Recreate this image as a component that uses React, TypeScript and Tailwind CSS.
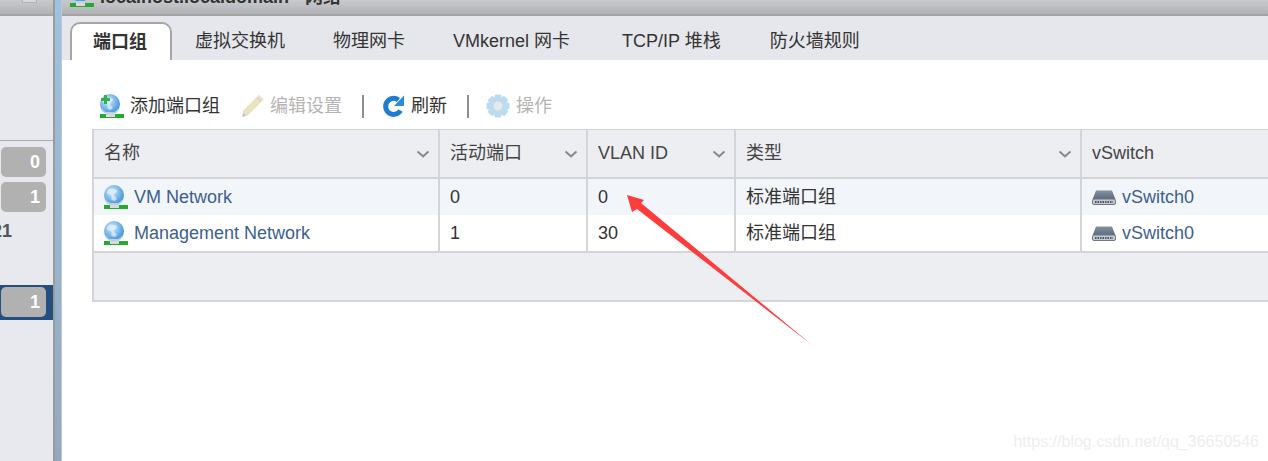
import React from "react";

function Globe({ plus = false }: { plus?: boolean }) {
  return (
    <svg width="24" height="24" viewBox="0 0 24 24" className="shrink-0">
      <defs>
        <radialGradient id="gb" cx="0.4" cy="0.35" r="0.7">
          <stop offset="0" stopColor="#d5ecfb" />
          <stop offset="0.55" stopColor="#7ab8ea" />
          <stop offset="1" stopColor="#3b8ad6" />
        </radialGradient>
      </defs>
      <circle cx="10" cy="10" r="10" fill="url(#gb)" />
      <path d="M6 3.500c3 .5 6 0 7 2s-3 2.500-3 4.500 3 2 2.500 4-3 2-4.500 1 .5-3-1-4.500-4-1-4-3 1.500-3.500 3-4z" fill="#e4f2fc" opacity="0.7" />
      <path d="M1.500 15a10 10 0 0 0 17 0" fill="none" stroke="#a6d3f0" strokeWidth="1.500" />
      <rect x="6" y="18" width="9" height="2" fill="#c9ced3" />
      <rect x="0" y="20" width="24" height="4" fill="#22ab2e" />
      <rect x="6" y="20" width="9" height="3" fill="#d7dade" />
      {plus && <path d="M4 1h3v3h3v3H7v3H4V7H1V4h3z" fill="#31b24a" />}
    </svg>
  );
}

function Pencil() {
  return (
    <svg width="22" height="24" viewBox="0 0 22 24" className="shrink-0">
      <path d="M17 1.500l4 4L6 20.500l-5.500 2 1.500-6z" fill="#efe3b8" stroke="#d8d8d0" strokeWidth="1" />
      <path d="M15 3.500l4 4" stroke="#d5d5d5" strokeWidth="1.500" />
      <path d="M.5 22.500l1-3.500 2.500 2.500z" fill="#bdbdbd" />
    </svg>
  );
}

function Refresh() {
  return (
    <svg width="24" height="24" viewBox="0 0 24 24" className="shrink-0">
      <path d="M18.500 16.500a8 8 0 1 1-2-10.500" fill="none" stroke="#1f7dd1" strokeWidth="5" />
      <path d="M22 1.500V12H12z" fill="#2b8bdc" />
    </svg>
  );
}

function Gear() {
  return (
    <svg width="24" height="24" viewBox="0 0 24 24" className="shrink-0">
      {[0, 45, 90, 135].map((a) => (
        <rect key={a} x="8.500" y="0.500" width="7" height="23" rx="1.500" fill="#bcdaf0" transform={`rotate(${a} 12 12)`} />
      ))}
      <circle cx="12" cy="12" r="8.500" fill="#bcdaf0" />
      <circle cx="12" cy="12" r="4.500" fill="#e6e8ea" />
    </svg>
  );
}

function SwitchIcon() {
  return (
    <svg width="24" height="15" viewBox="0 0 24 15" className="shrink-0">
      <defs>
        <linearGradient id="sw" x1="0" y1="0" x2="0" y2="1">
          <stop offset="0" stopColor="#8592a6" />
          <stop offset="1" stopColor="#5a697d" />
        </linearGradient>
      </defs>
      <path d="M4 .5h16L23.500 9.500H.5z" fill="url(#sw)" />
      <rect x="0.500" y="9" width="23" height="5.500" rx="1.500" fill="#c3c8ce" stroke="#6d7682" strokeWidth="1" />
      <path d="M3 12h18" stroke="#47566a" strokeWidth="2" strokeDasharray="1.500 1" />
    </svg>
  );
}

function Chevron() {
  return (
    <svg width="14" height="8" viewBox="0 0 14 8" className="shrink-0">
      <path d="M1.500 1.500L7 6.300l5.500-4.800" fill="none" stroke="#8a8a8a" strokeWidth="2" />
    </svg>
  );
}

const COLS = "grid grid-cols-[346px_148px_148px_346px_1fr]";

function HeaderCell({ label, chevron = true }: { label: string; chevron?: boolean }) {
  return (
    <div className="flex items-center justify-between pl-[10px] pr-[8px] border-r-2 border-[#d4d5d8] last:border-r-0 text-[#444]">
      <span>{label}</span>
      {chevron && <Chevron />}
    </div>
  );
}

function Row({ name, active, vlan, bg }: { name: string; active: string; vlan: string; bg: string }) {
  return (
    <div className={`${COLS} h-[36px] ${bg}`}>
      <div className="flex items-center pl-[10px] gap-[6px] border-r-2 border-[#d4d5d8] text-[#3c5f8e]">
        <Globe />
        <span>{name}</span>
      </div>
      <div className="flex items-center pl-[10px] border-r-2 border-[#d4d5d8]">{active}</div>
      <div className="flex items-center pl-[10px] border-r-2 border-[#d4d5d8]">{vlan}</div>
      <div className="flex items-center pl-[10px] border-r-2 border-[#d4d5d8]">标准端口组</div>
      <div className="flex items-center pl-[10px] gap-[6px] text-[#3c5f8e]">
        <SwitchIcon />
        <span>vSwitch0</span>
      </div>
    </div>
  );
}

function Badge({ n }: { n: string }) {
  return (
    <div className="ml-[1px] w-[45px] h-[30px] rounded-[5px] bg-[#b1b1b1] text-white font-bold flex items-center justify-end pr-[6px]">
      {n}
    </div>
  );
}

export default function App() {
  return (
    <div
      className="relative flex w-[1268px] h-[461px] overflow-hidden bg-white text-[18px] text-[#333]"
      style={{ fontFamily: '"Liberation Sans","Noto Sans CJK SC",sans-serif' }}
    >
      {/* sidebar */}
      <div className="w-[55px] shrink-0 flex flex-col overflow-hidden bg-[#e8e9ee] border-r-2 border-[#9b9b9b]">
        <div className="h-[16px] shrink-0 bg-gradient-to-b from-[#c9cacd] to-[#b1b2b5] border-b-2 border-[#a4a4a4] pl-[22px]">
          <div className="w-[15px] h-[3px] bg-[#d8d8da] border-x border-b border-[#b4b4b4]" />
        </div>
        <div className="h-[125px] shrink-0 border-b border-[#a9a9a9]" />
        <div className="mt-[6px]">
          <Badge n="0" />
        </div>
        <div className="mt-[5px]">
          <Badge n="1" />
        </div>
        <div className="h-[73px] pt-[10px] font-bold text-[#555] leading-[18px] -ml-[8px]">21</div>
        <div className="h-[35px] pt-[2px] bg-[#254f80]">
          <Badge n="1" />
        </div>
      </div>

      {/* splitter */}
      <div className="w-[6px] shrink-0 bg-gradient-to-b from-[#9dc3e2] to-[#93a8c0]" />

      {/* main */}
      <div className="flex-1 min-w-0 flex flex-col border-l border-[#c4c5c8]">
        <div className="h-[16px] shrink-0 overflow-hidden flex items-end gap-[6px] pl-[8px] pb-[7px] bg-gradient-to-b from-[#c9cacd] to-[#b1b2b5] border-b-2 border-[#a4a4a4]">
          <Globe />
          <span className="mb-[1px] font-bold text-[#333] leading-[18px]">localhost.localdomain - 网络</span>
        </div>
        <div className="h-[44px] shrink-0 bg-[#e6e7ec] flex items-end pl-[8px]">
          <div className="w-[102px] h-[38px] pr-[2px] flex items-center justify-center bg-white border-2 border-b-0 border-[#a6a6a6] rounded-t-[10px] font-bold">
            端口组
          </div>
          <div className="h-[38px] flex items-center pl-[23px]">虚拟交换机</div>
          <div className="h-[38px] flex items-center pl-[48px]">物理网卡</div>
          <div className="h-[38px] flex items-center pl-[48px]">VMkernel 网卡</div>
          <div className="h-[38px] flex items-center pl-[52px]">TCP/IP 堆栈</div>
          <div className="h-[38px] flex items-center pl-[49px]">防火墙规则</div>
        </div>

        <div className="pl-[30px] pt-[34px]">
          {/* toolbar */}
          <div className="h-[24px] flex items-center pl-[8px]">
            <Globe plus />
            <span className="ml-[6px]">添加端口组</span>
            <span className="ml-[22px]"><Pencil /></span>
            <span className="ml-[6px] text-[#b4b4b4]">编辑设置</span>
            <span className="ml-[20px] w-[2px] h-[23px] bg-[#8e8e8e]" />
            <span className="ml-[18px]"><Refresh /></span>
            <span className="ml-[5px]">刷新</span>
            <span className="ml-[20px] w-[2px] h-[23px] bg-[#8e8e8e]" />
            <span className="ml-[17px]"><Gear /></span>
            <span className="ml-[6px] text-[#b4b4b4]">操作</span>
          </div>

          {/* table */}
          <div className="mt-[11px] border-t border-x-2 border-b-2 border-r-0 border-[#d4d5d8]">
            <div className={`${COLS} h-[47px] bg-[#edeef2]`}>
              <HeaderCell label="名称" />
              <HeaderCell label="活动端口" />
              <HeaderCell label="VLAN ID" />
              <HeaderCell label="类型" />
              <HeaderCell label="vSwitch" chevron={false} />
            </div>
            <div className="border-t-2 border-[#d4d5d8]">
              <Row name="VM Network" active="0" vlan="0" bg="bg-[#f2f5fa]" />
              <Row name="Management Network" active="1" vlan="30" bg="bg-white" />
            </div>
            <div className="h-[49px] border-t-2 border-[#d4d5d8] bg-[#edeef2]" />
          </div>
        </div>
      </div>

      {/* annotation arrow */}
      <svg width="1268" height="461" viewBox="0 0 1268 461" className="absolute inset-0 pointer-events-none">
        <polygon points="627,195 644,200 641,203 812,345 637,209 632,212" fill="#ff3c3c" />
      </svg>

      {/* watermark */}
      <div className="absolute right-[9px] bottom-[9px] text-[16px] leading-[20px] text-[#eeeeee]">
        https://blog.csdn.net/qq_36650546
      </div>
    </div>
  );
}
